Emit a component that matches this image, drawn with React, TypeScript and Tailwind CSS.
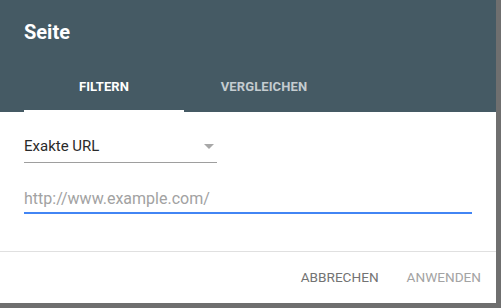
import React from "react";

export default function App() {
  return (
    <div
      className="w-[501px] h-[308px] bg-[#6f6f6f] overflow-hidden"
      style={{ fontFamily: "Roboto, 'Liberation Sans', sans-serif" }}
    >
      <div className="w-[496px] h-[303px] bg-white flex flex-col">
        {/* Header */}
        <div className="bg-[#455a64] h-[112px] px-6 flex flex-col">
          <div className="h-16 flex items-center text-[20px] font-bold text-white leading-none">
            Seite
          </div>
          <div className="flex h-12">
            <div className="w-[160px] flex items-center justify-center text-[13px] font-bold text-white border-b-2 border-white tracking-[0.1px]">
              FILTERN
            </div>
            <div className="w-[160px] flex items-center justify-center text-[13px] font-bold text-[#c4ccd0] border-b-2 border-transparent tracking-[0.1px]">
              VERGLEICHEN
            </div>
          </div>
        </div>

        {/* Body */}
        <div className="px-6 flex flex-col">
          <div className="mt-[18px] w-[193px] h-[33px] border-b border-[#9e9e9e] flex items-center justify-between">
            <span className="text-[15px] text-[#2a2a2a]">Exakte URL</span>
            <svg width="10" height="5" viewBox="0 0 10 5" className="mr-[3px]">
              <path d="M0 0 L10 0 L5 5 Z" fill="#a8a8a8" />
            </svg>
          </div>
          <div className="mt-[19px] h-[32px] pt-[4px] border-b-2 border-[#4285f4] flex items-center">
            <span className="text-[16px] text-[#a2a2a2]">http://www.example.com/</span>
          </div>
        </div>

        {/* Divider + footer */}
        <div className="mt-[37px] border-t border-[#e0e0e0] h-[52px] flex items-center justify-end gap-[28px] pr-[15px]">
          <span className="text-[13.6px] text-[#737373]">ABBRECHEN</span>
          <span className="text-[13.6px] text-[#a3a3a3]">ANWENDEN</span>
        </div>
      </div>
    </div>
  );
}
